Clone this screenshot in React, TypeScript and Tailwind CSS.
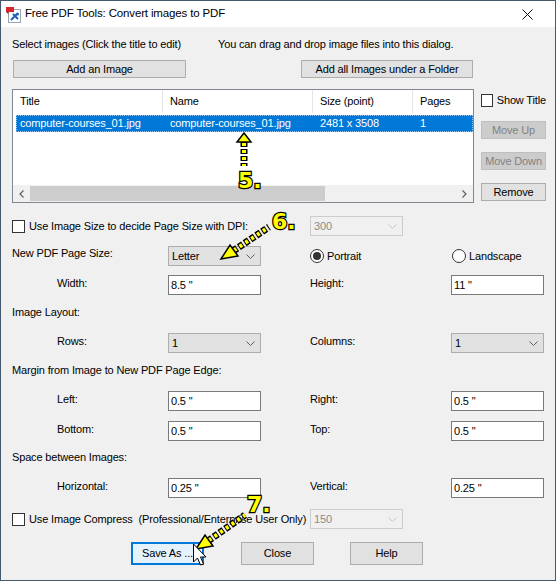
import React from 'react';

function Chevron({ disabled }: { disabled?: boolean }) {
  return (
    <svg width="9" height="5" viewBox="0 0 9 5" className="shrink-0">
      <path d="M0.5 0.5 L4.5 4.5 L8.5 0.5" fill="none" stroke={disabled ? '#c4c4c4' : '#606060'} strokeWidth="1" />
    </svg>
  );
}

function Btn({ children, className = '', disabled }: { children: React.ReactNode; className?: string; disabled?: boolean }) {
  return (
    <div
      className={`flex items-center justify-center border ${
        disabled ? 'border-[#bfbfbf] bg-[#cccccc] text-[#838383]' : 'border-[#adadad] bg-[#e1e1e1]'
      } ${className}`}
    >
      {children}
    </div>
  );
}

function Combo({ value, disabled }: { value: string; disabled?: boolean }) {
  return (
    <div
      className={`flex h-[20px] w-[93px] items-center justify-between border pl-[3px] pr-[5px] ${
        disabled ? 'border-[#cccccc] bg-[#f0f0f0] text-[#8a8a8a]' : 'border-[#adadad] bg-[#e1e1e1]'
      }`}
    >
      <span>{value}</span>
      <Chevron disabled={disabled} />
    </div>
  );
}

function Field({ value }: { value: string }) {
  return (
    <div className="flex h-[20px] w-[93px] items-center border border-[#7a7a7a] bg-white pl-[2px]">{value}</div>
  );
}

function Check({ label }: { label: string }) {
  return (
    <div className="flex items-center">
      <div className="h-[13px] w-[13px] border border-[#333333] bg-white" />
      <span className="ml-[4px] whitespace-pre">{label}</span>
    </div>
  );
}

function Radio({ label, checked }: { label: string; checked?: boolean }) {
  return (
    <div className="flex items-center">
      <div className="flex h-[14px] w-[14px] items-center justify-center rounded-full border border-[#333333] bg-white">
        {checked && <div className="h-[8px] w-[8px] rounded-full bg-[#333333]" />}
      </div>
      <span className="ml-[3px]">{label}</span>
    </div>
  );
}

// one line of the form: label / control / label / control
function PairRow({ l1, c1, l2, c2, className = '' }: { l1: string; c1: React.ReactNode; l2: string; c2: React.ReactNode; className?: string }) {
  return (
    <div className={`grid h-[20px] grid-cols-[156px_93px_49px_141px_93px] items-center ${className}`}>
      <div className="-mt-[3px] pl-[45px]">{l1}</div>
      {c1}
      <div />
      <div className="-mt-[3px]">{l2}</div>
      {c2}
    </div>
  );
}

function Annotations() {
  const txt = {
    fontFamily: "'DejaVu Sans', sans-serif",
    fontWeight: 700,
    fontSize: 22,
    fill: '#ffff00',
    stroke: '#000',
    strokeWidth: 2.5,
    paintOrder: 'stroke' as const,
  };
  return (
    <svg width="556" height="581" className="pointer-events-none absolute left-0 top-0">
      {/* 5 */}
      <line x1="243" y1="141" x2="243" y2="165" stroke="#000" strokeWidth="7" strokeDasharray="5 2" />
      <line x1="243" y1="142" x2="243" y2="165" stroke="#ffff00" strokeWidth="4" strokeDasharray="3 4" />
      <polygon points="243,132 250,141 236,141" fill="#ffff00" stroke="#000" strokeWidth="1.5" />
      <text x="237" y="187" style={txt}>5.</text>

      {/* 6 */}
      <line x1="232" y1="250" x2="268" y2="226" stroke="#000" strokeWidth="7" strokeDasharray="5 2" />
      <line x1="232" y1="250" x2="268" y2="226" stroke="#ffff00" strokeWidth="4" strokeDasharray="3 4" strokeDashoffset="-1" />
      <polygon points="220,258 229,244 237,255" fill="#ffff00" stroke="#000" strokeWidth="1.5" />
      <text x="271" y="228" style={txt}>6.</text>

      {/* 7 */}
      <line x1="207" y1="540" x2="244" y2="514" stroke="#000" strokeWidth="7" strokeDasharray="5 2" />
      <line x1="207" y1="540" x2="244" y2="514" stroke="#ffff00" strokeWidth="4" strokeDasharray="3 4" strokeDashoffset="-1" />
      <polygon points="195,548 204,534 212,545" fill="#ffff00" stroke="#000" strokeWidth="1.5" />
      <text x="246" y="511" style={txt}>7.</text>

      {/* mouse pointer */}
      <path
        d="M192.5 543 L192.5 561 L196.5 557 L199.5 564 L202.5 563 L199.5 556 L205 556 Z"
        fill="#fff"
        stroke="#000"
        strokeWidth="1"
        strokeLinejoin="round"
      />
    </svg>
  );
}

export default function App() {
  return (
    <div className="relative h-[581px] w-[556px] overflow-hidden border border-[#44596e] bg-[#f0f0f0] font-['Liberation_Sans',Arial,sans-serif] text-[11px] tracking-[-0.15px] text-black">
      {/* title bar */}
      <div className="flex h-[26px] items-center bg-white text-[11.5px] tracking-[-0.15px]">
        <svg width="17" height="17" viewBox="0 0 17 17" className="ml-[4px]">
          <rect x="3.5" y="3.5" width="12" height="13" fill="#fff" stroke="#9aa4b4" />
          <path d="M1 1 L9 1 L9 6 L1 6 Z" fill="#d8262a" />
          <path d="M1 6 L3.5 8 L3.5 6 Z" fill="#8c1416" />
          <path d="M6 14 L12 8 M8 8 L13 13" stroke="#1f5fbf" strokeWidth="2" />
          <circle cx="12.5" cy="8" r="1.5" fill="#1f5fbf" />
        </svg>
        <span className="ml-[3px]">Free PDF Tools: Convert images to PDF</span>
        <svg width="11" height="11" viewBox="0 0 11 11" className="ml-auto mr-[22px]">
          <path d="M0.5 0.5 L10.5 10.5 M10.5 0.5 L0.5 10.5" stroke="#111" strokeWidth="1" />
        </svg>
      </div>

      <div className="pl-[11px]">
        {/* hints */}
        <div className="mt-[9px] flex h-[17px] items-center">
          <span className="w-[206px]">Select images (Click the title to edit)</span>
          <span>You can drag and drop image files into this dialog.</span>
        </div>

        {/* add buttons */}
        <div className="mt-[7px] flex">
          <Btn className="ml-[1px] h-[18px] w-[173px]">Add an Image</Btn>
          <Btn className="ml-[115px] h-[18px] w-[172px]">Add all Images under a Folder</Btn>
        </div>

        {/* list + side buttons */}
        <div className="mt-[11px] flex">
          <div className="flex h-[114px] w-[462px] flex-col border border-[#828790] bg-white">
            <div className="flex h-[23px] shrink-0">
              <div className="w-[150px] border-r border-[#e5e5e5] pl-[7px] leading-[23px]">Title</div>
              <div className="w-[150px] border-r border-[#e5e5e5] pl-[7px] leading-[23px]">Name</div>
              <div className="w-[100px] border-r border-[#e5e5e5] pl-[7px] leading-[23px]">Size (point)</div>
              <div className="flex-1 pl-[7px] leading-[23px]">Pages</div>
            </div>
            <div className="ml-[3px] mt-[2px] flex h-[17px] items-center bg-[#0078d7] text-white outline-1 outline-dotted outline-offset-[-1px] outline-[#9cc7f0]">
              <div className="w-[147px] pl-[4px]">computer-courses_01.jpg</div>
              <div className="w-[150px] pl-[7px]">computer-courses_01.jpg</div>
              <div className="w-[100px] pl-[7px]">2481 x 3508</div>
              <div className="flex-1 pl-[7px]">1</div>
            </div>
            <div className="mt-auto flex h-[17px] bg-[#f0f0f0]">
              <div className="flex w-[17px] items-center justify-center">
                <svg width="5" height="8" viewBox="0 0 5 8">
                  <path d="M4.5 0.5 L1 4 L4.5 7.5" fill="none" stroke="#606060" strokeWidth="1.2" />
                </svg>
              </div>
              <div className="my-[1px] w-[295px] bg-[#cdcdcd]" />
              <div className="flex-1" />
              <div className="flex w-[17px] items-center justify-center">
                <svg width="5" height="8" viewBox="0 0 5 8">
                  <path d="M0.5 0.5 L4 4 L0.5 7.5" fill="none" stroke="#606060" strokeWidth="1.2" />
                </svg>
              </div>
            </div>
          </div>

          <div className="ml-[7px] flex w-[65px] flex-col pt-[3px]">
            <div className="h-[13px]">
              <Check label="Show Title" />
            </div>
            <Btn disabled className="mt-[16px] h-[18px]">Move Up</Btn>
            <Btn disabled className="mt-[13px] h-[18px]">Move Down</Btn>
            <Btn className="mt-[13px] h-[18px]">Remove</Btn>
          </div>
        </div>

        {/* page options */}
        <div className="mt-[13px] flex h-[20px] items-center">
          <div className="w-[298px]">
            <Check label="Use Image Size to decide Page Size with DPI:" />
          </div>
          <Combo value="300" disabled />
        </div>

        <div className="mt-[10px] grid h-[20px] grid-cols-[156px_93px_49px_141px_93px] items-center">
          <div className="-mt-[5px]">New PDF Page Size:</div>
          <Combo value="Letter" />
          <div />
          <Radio label="Portrait" checked />
          <div className="pl-[1px]">
            <Radio label="Landscape" />
          </div>
        </div>

        <PairRow className="mt-[9px]" l1="Width:" c1={<Field value={'8.5 "'} />} l2="Height:" c2={<Field value={'11 "'} />} />

        <div className="mt-[8px] flex h-[18px] items-center">Image Layout:</div>
        <PairRow className="mt-[12px]" l1="Rows:" c1={<Combo value="1" />} l2="Columns:" c2={<Combo value="1" />} />

        <div className="mt-[8px] flex h-[18px] items-center">Margin from Image to New PDF Page Edge:</div>
        <PairRow className="mt-[12px]" l1="Left:" c1={<Field value={'0.5 "'} />} l2="Right:" c2={<Field value={'0.5 "'} />} />
        <PairRow className="mt-[10px]" l1="Bottom:" c1={<Field value={'0.5 "'} />} l2="Top:" c2={<Field value={'0.5 "'} />} />

        <div className="mt-[7px] flex h-[18px] items-center">Space between Images:</div>
        <PairRow className="mt-[12px]" l1="Horizontal:" c1={<Field value={'0.25 "'} />} l2="Vertical:" c2={<Field value={'0.25 "'} />} />

        <div className="mt-[11px] flex h-[20px] items-center">
          <div className="w-[298px]">
            <Check label="Use Image Compress  (Professional/Enterprise User Only)" />
          </div>
          <Combo value="150" disabled />
        </div>

        {/* dialog buttons */}
        <div className="mt-[13px] flex">
          <div className="ml-[119px] flex h-[23px] w-[73px] items-center justify-center border-2 border-[#0078d7] bg-[#e5f1fb]">
            Save As ...
          </div>
          <Btn className="ml-[37px] h-[23px] w-[73px]">Close</Btn>
          <Btn className="ml-[36px] h-[23px] w-[73px]">Help</Btn>
        </div>
      </div>

      <Annotations />
    </div>
  );
}
